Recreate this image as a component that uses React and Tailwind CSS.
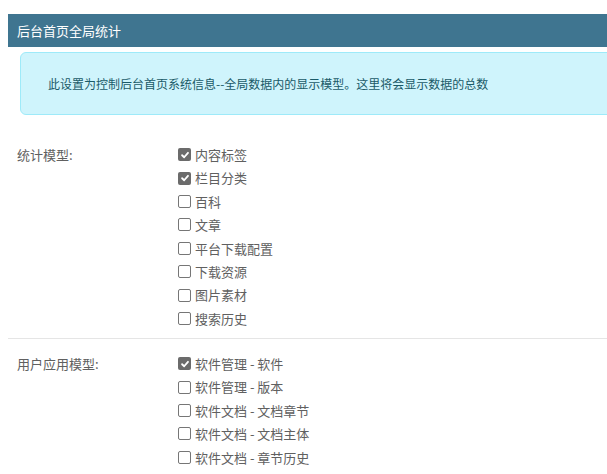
const font = { fontFamily: '"Microsoft YaHei", "Noto Sans CJK SC", "Noto Sans", sans-serif' }

const statModels = [
  { label: '内容标签', checked: true },
  { label: '栏目分类', checked: true },
  { label: '百科', checked: false },
  { label: '文章', checked: false },
  { label: '平台下载配置', checked: false },
  { label: '下载资源', checked: false },
  { label: '图片素材', checked: false },
  { label: '搜索历史', checked: false },
]

const userModels = [
  { label: '软件管理 - 软件', checked: true },
  { label: '软件管理 - 版本', checked: false },
  { label: '软件文档 - 文档章节', checked: false },
  { label: '软件文档 - 文档主体', checked: false },
  { label: '软件文档 - 章节历史', checked: false },
]

function Box({ checked }) {
  if (checked) {
    return (
      <span className="flex h-[13px] w-[13px] shrink-0 items-center justify-center rounded-[2px] bg-[#6b6b6b]">
        <svg viewBox="0 0 12 12" className="h-[10px] w-[10px]" fill="none" stroke="white" strokeWidth="2.2" strokeLinecap="round" strokeLinejoin="round">
          <path d="M2.5 6.3 L5 8.7 L9.6 3.4" />
        </svg>
      </span>
    )
  }
  return <span className="h-[13px] w-[13px] shrink-0 rounded-[2px] border border-[#767676] bg-white" />
}

function Group({ title, items }) {
  return (
    <div className="flex">
      <div className="w-[170px] shrink-0 pl-[9px] text-[13px] leading-[23.4px] text-[#606060]">{title}</div>
      <div className="flex flex-col">
        {items.map((it) => (
          <label key={it.label} className="flex h-[23.4px] items-center gap-[4px] text-[13px] text-[#606060]">
            <Box checked={it.checked} />
            <span>{it.label}</span>
          </label>
        ))}
      </div>
    </div>
  )
}

export default function App() {
  return (
    <div className="h-[474px] w-[607px] overflow-hidden bg-white pl-[8px] pt-[14px]" style={font}>
      {/* Title bar */}
      <div className="flex h-[33px] w-[620px] items-center bg-[#3f7590] pl-[9px] text-[13px] text-white">
        后台首页全局统计
      </div>

      {/* Notice */}
      <div className="ml-[12px] mt-[5px] flex h-[63px] w-[620px] items-center rounded-[6px] border border-[#9eeaf9] bg-[#cff4fc] pl-[27px] text-[12px] text-[#1a5a68]">
        此设置为控制后台首页系统信息--全局数据内的显示模型。这里将会显示数据的总数
      </div>

      {/* Stat models */}
      <div className="mt-[28px]">
        <Group title="统计模型:" items={statModels} />
      </div>

      <div className="mt-[8px] w-[620px] border-t border-[#e5e5e5]" />

      <div className="mt-[13px]">
        <Group title="用户应用模型:" items={userModels} />
      </div>
    </div>
  )
}
